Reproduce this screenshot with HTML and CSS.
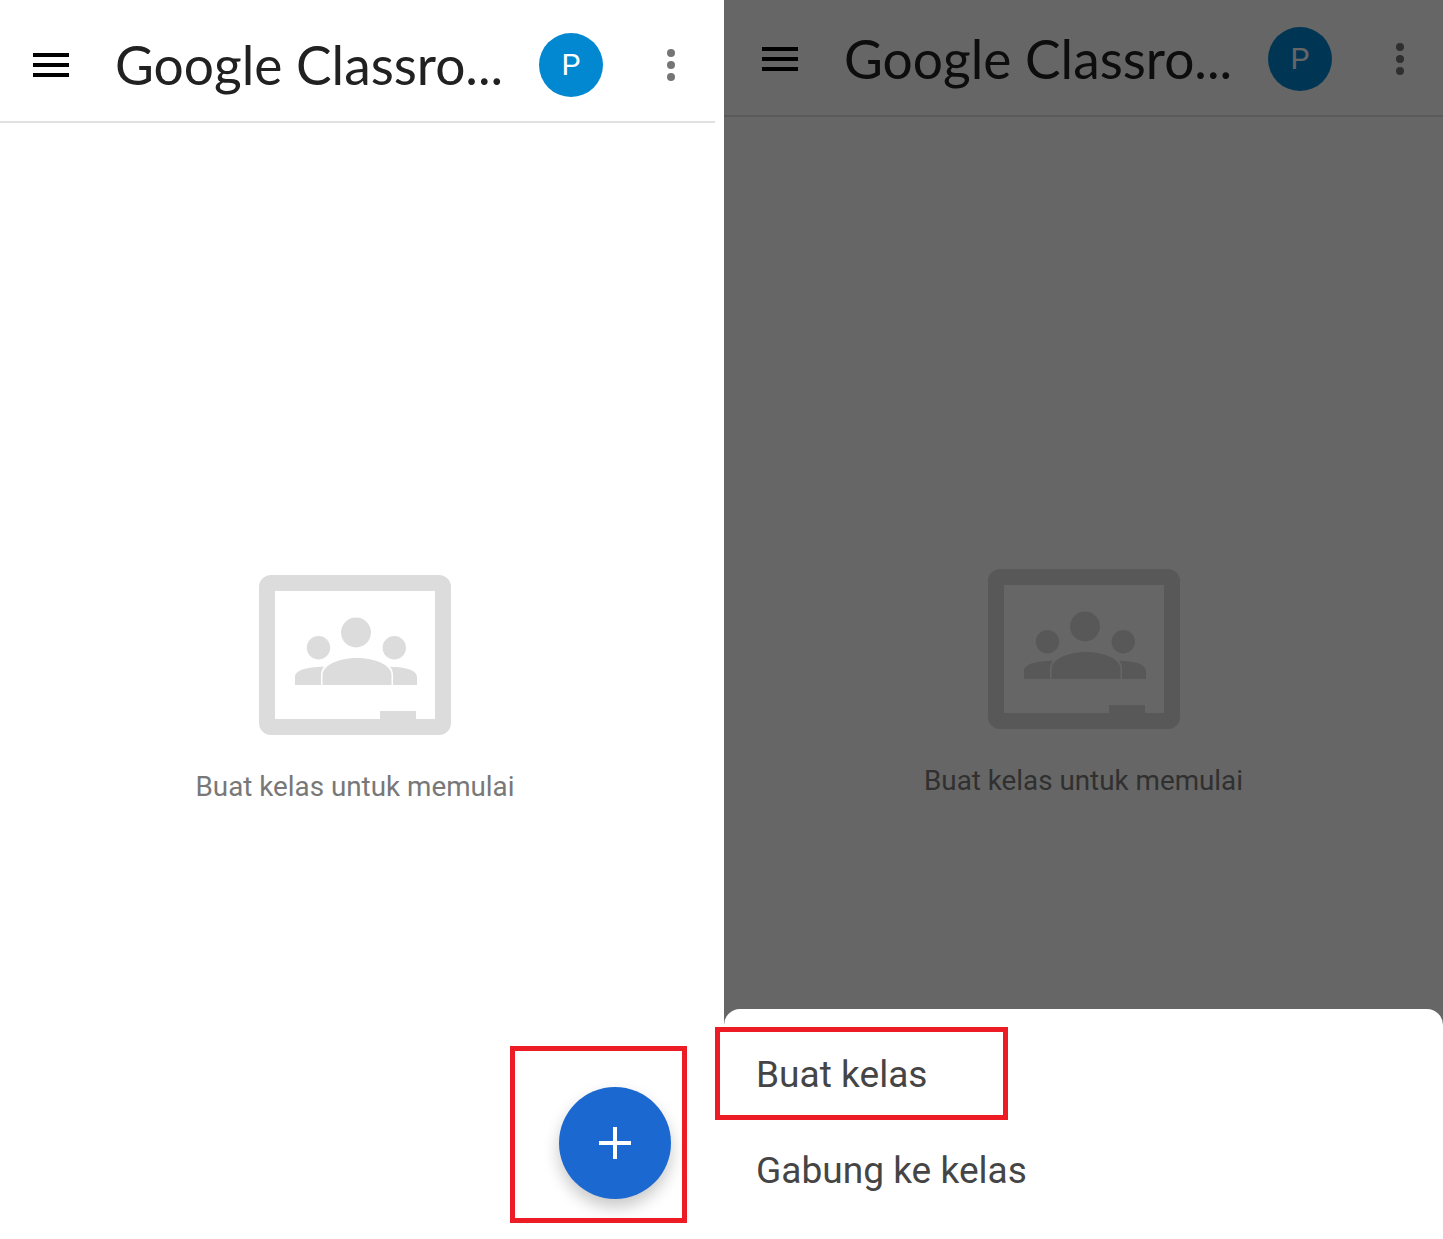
FILE: index.html
```html
<!DOCTYPE html>
<html lang="id">
<head>
    <meta charset="UTF-8">
    <meta name="viewport" content="width=device-width, initial-scale=1.0">
    <title>Google Classroom</title>
    <link rel="stylesheet" href="styles.css">
</head>
<body>

<div class="page">
    <section class="screen screen-left">
        <header class="appbar">
            <div class="burger"><span></span><span></span><span></span></div>
            <div class="title">Google Classro...</div>
            <div class="avatar">P</div>
            <div class="more"><span></span><span></span><span></span></div>
        </header>
        <div class="empty">
            <svg class="empty-icon" viewBox="0 0 192 160" width="192" height="160">
                <path fill-rule="evenodd" d="M12 0H180A12 12 0 0 1 192 12V148A12 12 0 0 1 180 160H12A12 12 0 0 1 0 148V12A12 12 0 0 1 12 0ZM16 16V144H121V136H157V144H176V16Z"/>
                <circle cx="97" cy="57.5" r="15"/>
                <circle cx="59.5" cy="72.7" r="11.7"/>
                <circle cx="135.3" cy="72.7" r="11.7"/>
                <path d="M63.5 110V100C63.5 90 80 83 98 83S132.5 90 132.5 100V110Z"/>
                <path d="M36 110V102C36 96 46 91.8 65 91.8C63 94 62 97 62 100V110Z"/>
                <path d="M158 110V102C158 96 148 91.8 131 91.8C133 94 134 97 134 100V110Z"/>
            </svg>
            <p class="empty-text">Buat kelas untuk memulai</p>
        </div>
        <button class="fab">
            <svg viewBox="0 0 32 32" width="32" height="32"><path d="M14 0h4v14h14v4H18v14h-4V18H0v-4h14z"/></svg>
        </button>
    </section>

    <section class="screen screen-right">
        <header class="appbar">
            <div class="burger"><span></span><span></span><span></span></div>
            <div class="title">Google Classro...</div>
            <div class="avatar">P</div>
            <div class="more"><span></span><span></span><span></span></div>
        </header>
        <div class="empty">
            <svg class="empty-icon" viewBox="0 0 192 160" width="192" height="160">
                <path fill-rule="evenodd" d="M12 0H180A12 12 0 0 1 192 12V148A12 12 0 0 1 180 160H12A12 12 0 0 1 0 148V12A12 12 0 0 1 12 0ZM16 16V144H121V136H157V144H176V16Z"/>
                <circle cx="97" cy="57.5" r="15"/>
                <circle cx="59.5" cy="72.7" r="11.7"/>
                <circle cx="135.3" cy="72.7" r="11.7"/>
                <path d="M63.5 110V100C63.5 90 80 83 98 83S132.5 90 132.5 100V110Z"/>
                <path d="M36 110V102C36 96 46 91.8 65 91.8C63 94 62 97 62 100V110Z"/>
                <path d="M158 110V102C158 96 148 91.8 131 91.8C133 94 134 97 134 100V110Z"/>
            </svg>
            <p class="empty-text">Buat kelas untuk memulai</p>
        </div>
        <div class="scrim"></div>
        <div class="sheet">
            <div class="sheet-item">Buat kelas</div>
            <div class="sheet-item">Gabung ke kelas</div>
        </div>
    </section>

    <div class="mark mark-fab"></div>
    <div class="mark mark-item"></div>
</div>

</body>
</html>
```

FILE: styles.css
```css
* {
    box-sizing: border-box;
}

body {
    margin: 0;
    background-color: white;
    font-family: "Roboto", sans-serif;
}

.page {
    position: relative;
    width: 1443px;
    height: 1239px;
    display: flex;
    overflow: hidden;
}

.screen {
    position: relative;
    width: 720px;
    height: 1239px;
    flex-shrink: 0;
    background-color: white;
}

.screen-left {
    margin-left: -5px;
    margin-right: 9px;
    padding-top: 6px;
}

.screen-right {
    width: 719px;
}

.appbar {
    display: flex;
    align-items: center;
    height: 117px;
    padding: 3px 0 0 38px;
    border-bottom: 2px solid #e0e0e0;
}

.burger {
    display: flex;
    flex-direction: column;
    gap: 6px;
    width: 36px;
}

.burger span {
    height: 4px;
    background-color: black;
}

.title {
    margin: -2px 0 0 46px;
    width: 424px;
    font-family: "Lato", sans-serif;
    font-size: 53.3px;
    color: #212121;
    white-space: nowrap;
}

.avatar {
    width: 64px;
    height: 64px;
    border-radius: 50%;
    background-color: #0288d1;
    color: white;
    font-size: 30px;
    line-height: 64px;
    text-align: center;
}

.more {
    display: flex;
    flex-direction: column;
    gap: 4px;
    margin-left: 64px;
}

.more span {
    width: 8px;
    height: 8px;
    border-radius: 50%;
    background-color: #757575;
}

.empty {
    display: flex;
    flex-direction: column;
    align-items: center;
    padding-top: 452px;
}

.empty-icon {
    fill: #dcdcdc;
}

.empty-text {
    margin: 34px 0 0;
    font-size: 27.8px;
    line-height: 36px;
    color: #787878;
}

.fab {
    position: absolute;
    left: 564px;
    top: 1087px;
    display: flex;
    align-items: center;
    justify-content: center;
    width: 112px;
    height: 112px;
    padding: 0;
    border: none;
    border-radius: 50%;
    background-color: #1b68d1;
    box-shadow: 0 8px 16px rgba(0, 0, 0, 0.22);
}

.fab svg {
    fill: white;
}

.scrim {
    position: absolute;
    inset: 0;
    background-color: rgba(0, 0, 0, 0.6);
}

.sheet {
    position: absolute;
    left: 0;
    right: 0;
    bottom: 0;
    height: 230px;
    padding-top: 18px;
    background-color: white;
    border-radius: 16px 16px 0 0;
}

.sheet-item {
    height: 96px;
    padding-left: 32px;
    font-size: 37.1px;
    line-height: 96px;
    color: #454545;
}

.mark {
    position: absolute;
    border: 5px solid #ed1c24;
}

.mark-fab {
    left: 510px;
    top: 1046px;
    width: 177px;
    height: 177px;
}

.mark-item {
    left: 715px;
    top: 1027px;
    width: 293px;
    height: 93px;
}
```
